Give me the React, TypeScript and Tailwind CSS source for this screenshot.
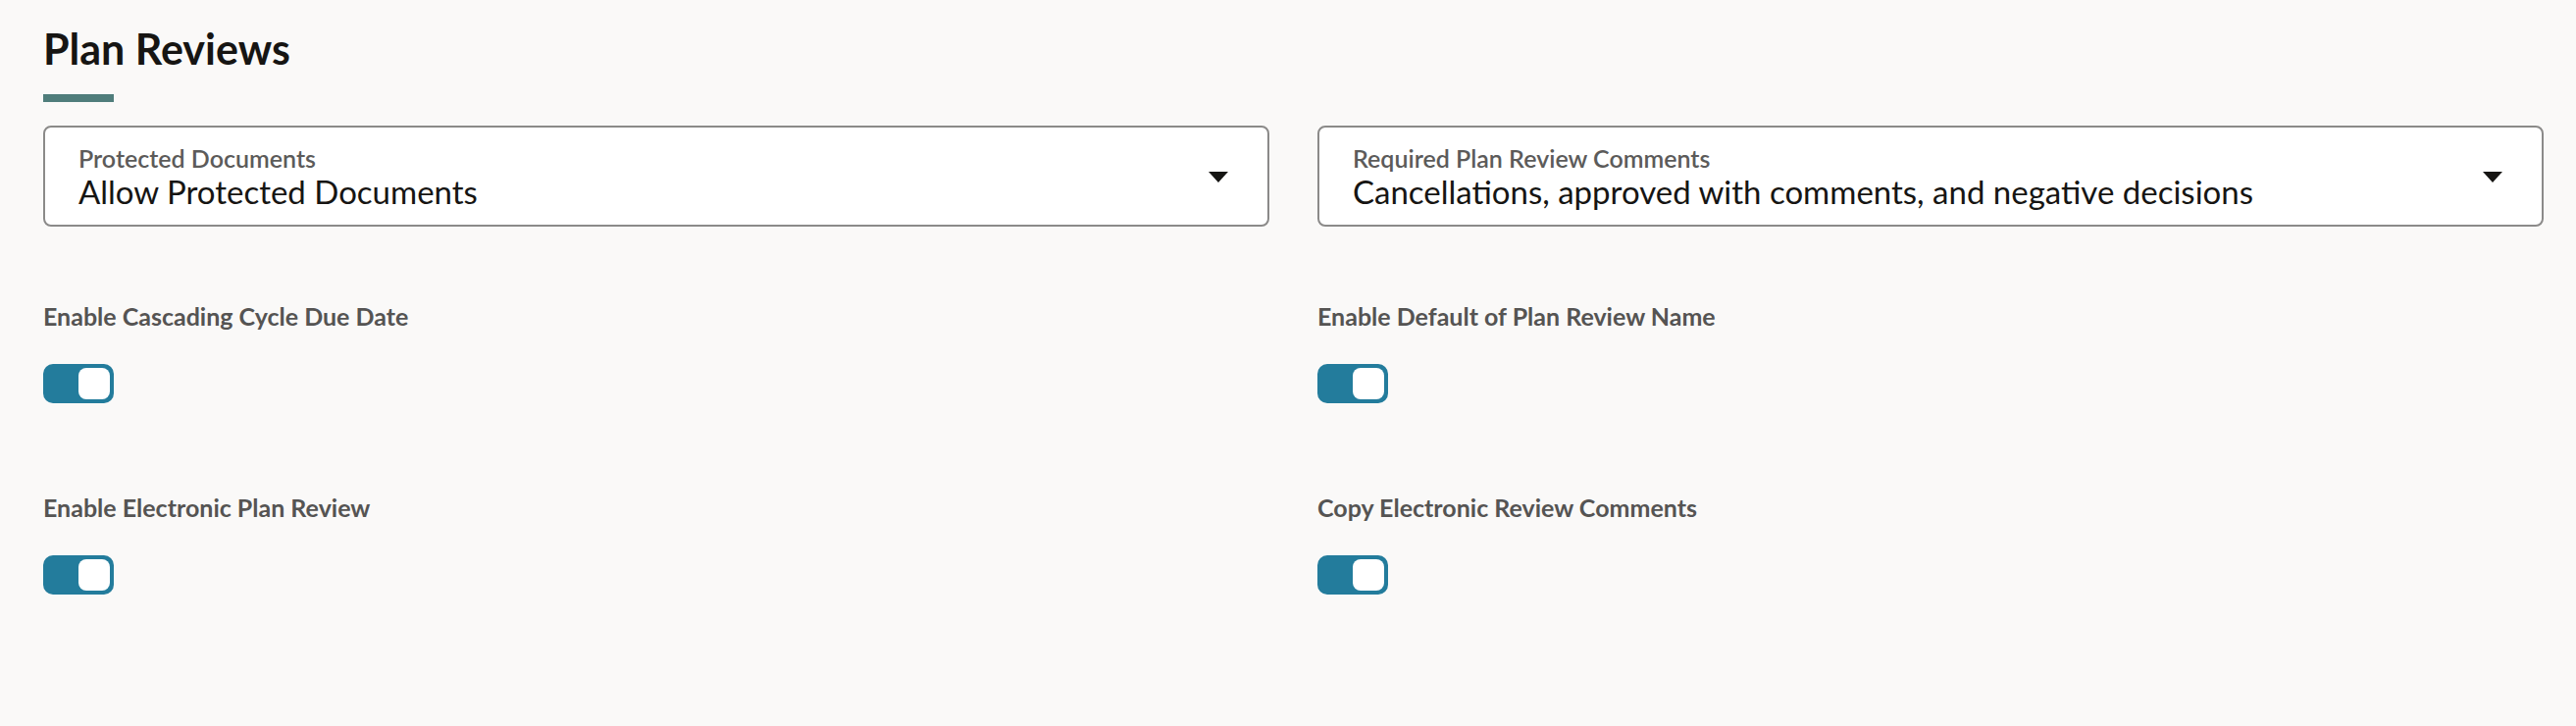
import { useState } from 'react'

type SelectProps = {
  label: string
  value: string
}

function SelectField({ label, value }: SelectProps) {
  return (
    <div className="flex items-center rounded-[8px] border-2 border-[#8b8a89] bg-white pl-[34px] pr-[40px] pt-[16px] pb-[15px]">
      <div className="flex-1 min-w-0">
        <div className="text-[25px] leading-[30px] font-semibold text-[#5c5b5a]">{label}</div>
        <div className="text-[33px] leading-[38px] text-[#161513]">{value}</div>
      </div>
      <svg width="20" height="11" viewBox="0 0 20 11" className="shrink-0">
        <polygon points="0,0 20,0 10,11" fill="#161513" />
      </svg>
    </div>
  )
}

function Toggle({ label, initial = true }: { label: string; initial?: boolean }) {
  const [on, setOn] = useState(initial)

  return (
    <div className="flex flex-col items-start">
      <div className="text-[25px] leading-[30px] font-bold text-[#555453]">{label}</div>
      <button
        type="button"
        onClick={() => setOn(!on)}
        className={
          'mt-[34px] flex h-[40px] w-[72px] items-center rounded-[10px] p-[4px] ' +
          (on ? 'justify-end bg-[#237c9c]' : 'justify-start bg-[#8b8a89]')
        }
      >
        <span className="block h-[32px] w-[32px] rounded-[8px] bg-white" />
      </button>
    </div>
  )
}

export default function App() {
  return (
    <div className="min-h-screen bg-[#faf9f8] pl-[44px] pr-[33px] pt-[26px] font-['Lato','Noto_Sans',sans-serif]">
      <h1 className="text-[43px] leading-[48px] font-bold text-[#161513]">Plan Reviews</h1>
      <div className="mt-[22px] h-[8px] w-[72px] bg-[#4f7d7b]" />

      <div className="mt-[24px] grid grid-cols-2 gap-x-[49px]">
        <SelectField label="Protected Documents" value="Allow Protected Documents" />
        <SelectField
          label="Required Plan Review Comments"
          value="Cancellations, approved with comments, and negative decisions"
        />
      </div>

      <div className="mt-[76px] grid grid-cols-2 gap-x-[49px] gap-y-[91px]">
        <Toggle label="Enable Cascading Cycle Due Date" />
        <Toggle label="Enable Default of Plan Review Name" />
        <Toggle label="Enable Electronic Plan Review" />
        <Toggle label="Copy Electronic Review Comments" />
      </div>
    </div>
  )
}
